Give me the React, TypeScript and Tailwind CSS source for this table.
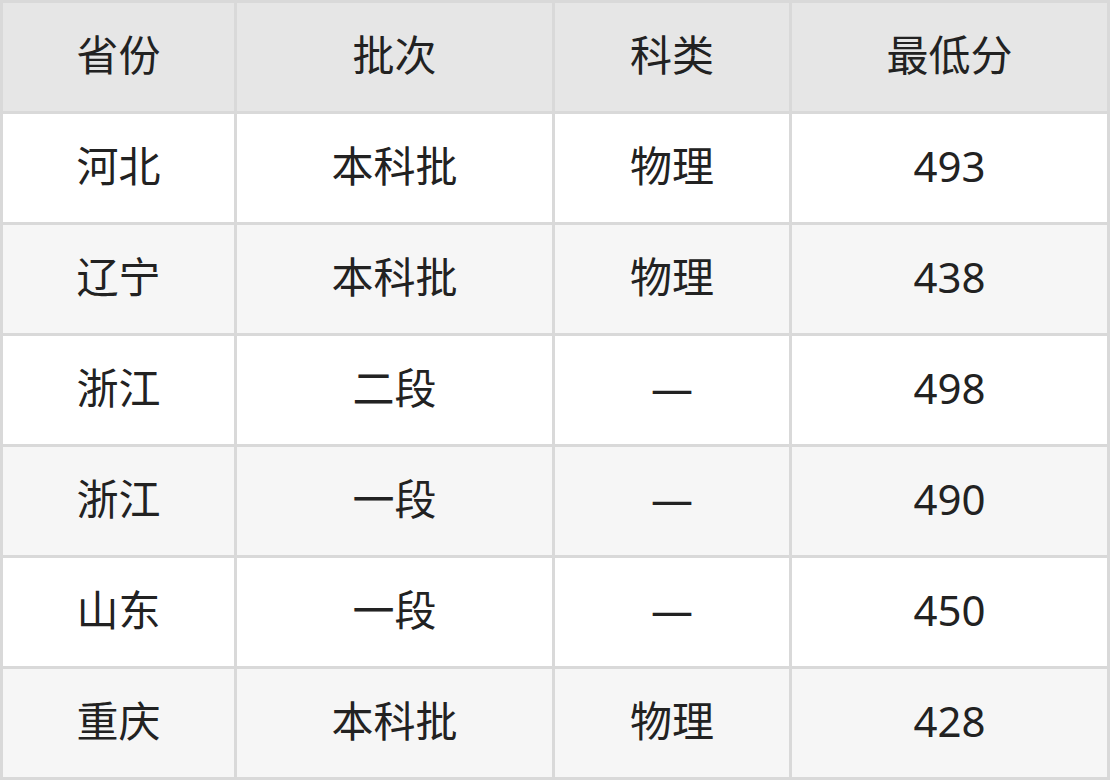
const rows = [
  ["河北", "本科批", "物理", "493"],
  ["辽宁", "本科批", "物理", "438"],
  ["浙江", "二段", "—", "498"],
  ["浙江", "一段", "—", "490"],
  ["山东", "一段", "—", "450"],
  ["重庆", "本科批", "物理", "428"],
]

const head = ["省份", "批次", "科类", "最低分"]

export default function App() {
  return (
    <div
      className="w-[1110px] h-[780px] bg-[#d9d9d9] p-[3px] grid grid-cols-[231px_315px_234px_315px] grid-rows-[repeat(7,108px)] gap-[3px] text-[42px] text-[#222222]"
      style={{ fontFamily: '"Noto Sans", "Noto Sans CJK SC", sans-serif' }}
    >
      {head.map((h) => (
        <div key={h} className="bg-[#e6e6e6] flex items-center justify-center pb-[5px]">
          {h}
        </div>
      ))}
      {rows.map((r, i) =>
        r.map((c, j) => (
          <div
            key={i + "-" + j}
            className={
              "flex items-center justify-center pb-[5px] " +
              (i % 2 === 0 ? "bg-white" : "bg-[#f6f6f6]")
            }
          >
            {c}
          </div>
        ))
      )}
    </div>
  )
}
